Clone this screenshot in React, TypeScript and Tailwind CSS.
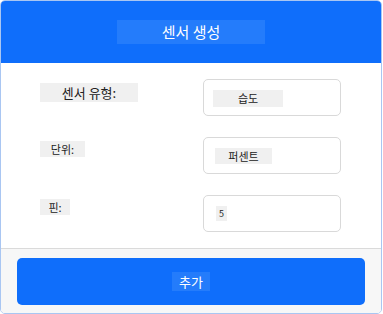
const font = { fontFamily: '"Noto Sans CJK KR", "Noto Sans", sans-serif' }

interface RowProps {
  label: string
  labelBox: string
  labelText: string
  value: string
  valueBox: string
  valueText: string
}

function FieldRow({ label, labelBox, labelText, value, valueBox, valueText }: RowProps) {
  return (
    <div className="flex h-[37px]">
      <div className="w-[163px] pt-1">
        <div className={`flex items-center justify-center bg-[#f0f0f0] text-[#222] ${labelBox} ${labelText}`}>
          {label}
        </div>
      </div>
      <div className="w-[138px] rounded-[5px] border border-[#d9d9d9] bg-white pl-[9px] pt-[10px]">
        <div className={`flex items-center justify-center bg-[#f0f0f0] text-[#222] ${valueBox} ${valueText}`}>
          {value}
        </div>
      </div>
    </div>
  )
}

export default function App() {
  return (
    <div className="h-[314px] w-[383px] bg-white" style={font}>
      <div className="flex h-[314px] w-[382px] flex-col overflow-hidden rounded-[5px] border border-[#a9c6f2]">
        <div className="flex h-[62px] items-center justify-center bg-[#0f6efb]">
          <div className="flex h-[24px] w-[148px] items-center justify-center bg-[#247cfb] text-[15px] text-white">
            센서 생성
          </div>
        </div>
        <div className="flex h-[185px] flex-col gap-[21px] bg-white pl-[39px] pt-4">
          <FieldRow
            label="센서 유형:"
            labelBox="h-[19px] w-[98px]"
            labelText="text-[13px]"
            value="습도"
            valueBox="h-[17px] w-[70px]"
            valueText="text-[11px]"
          />
          <FieldRow
            label="단위:"
            labelBox="h-[16px] w-[45px]"
            labelText="text-[11px]"
            value="퍼센트"
            valueBox="ml-[2px] h-[16px] w-[57px]"
            valueText="text-[11px]"
          />
          <FieldRow
            label="핀:"
            labelBox="h-[16px] w-[30px]"
            labelText="text-[11px]"
            value="5"
            valueBox="ml-[3px] h-[15px] w-[11px]"
            valueText="text-[9px]"
          />
        </div>
        <div className="flex flex-1 items-start border-t border-[#dadada] bg-[#f7f7f7] px-4 pt-[9px]">
          <button className="flex h-[47px] w-full items-center justify-center rounded-[5px] bg-[#0f6efb]">
            <span className="flex h-[19px] w-[38px] items-center justify-center bg-[#247cfb] text-[13px] text-white">
              추가
            </span>
          </button>
        </div>
      </div>
    </div>
  )
}
